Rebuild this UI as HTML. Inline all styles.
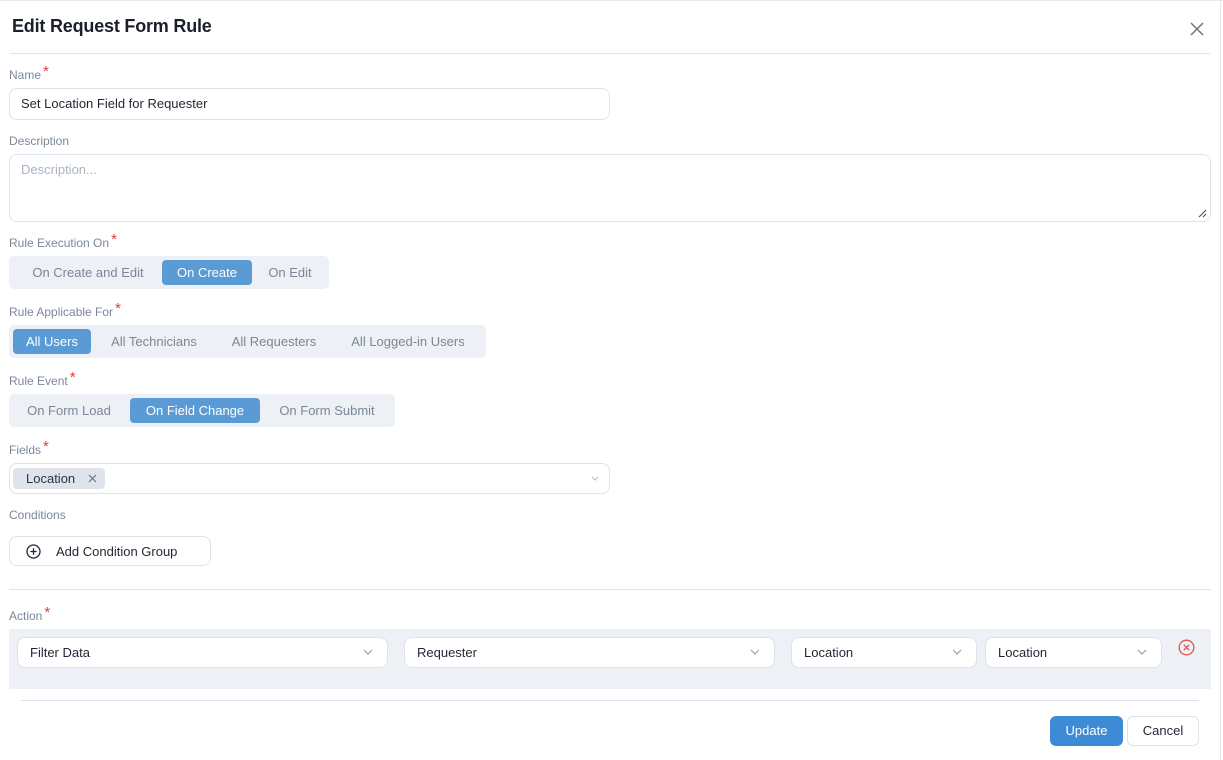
<!DOCTYPE html>
<html><head><style>
*{box-sizing:border-box;margin:0;padding:0}
body{width:1223px;height:760px;background:#fff;font-family:"Liberation Sans",sans-serif;position:relative;overflow:hidden;color:#1f2633}
.a{position:absolute}
.lbl{position:absolute;left:9px;font-size:12px;color:#7b8799}
.lbl b{color:#e53935;font-weight:normal;font-size:15px;position:relative;top:-3px;left:2px;line-height:10px}
.inp{position:absolute;border:1px solid #dde3ea;border-radius:8px;background:#fff}
.seg{position:absolute;background:#edf0f5;border-radius:5px;height:33px;font-size:13px;color:#7b8799}
.seg span{position:absolute;top:4px;height:25px;line-height:25px;text-align:center}
.seg .on{background:#5b9bd5;color:#fff;border-radius:4px}
.sel{position:absolute;top:637px;height:31px;background:#fff;border:1px solid #dde3ea;border-radius:8px;font-size:13px;color:#1f2633;line-height:29px;padding-left:12px}
.chev{position:absolute;right:14px;top:11px}
</style></head><body>
<div class="a" style="left:0;top:0;width:1223px;height:1px;background:#e6e9ee"></div>
<div class="a" style="left:12px;top:16px;font-size:18px;font-weight:bold;color:#1a1f2b;letter-spacing:-0.2px">Edit Request Form Rule</div>
<svg class="a" style="left:1190px;top:22px" width="14" height="14" viewBox="0 0 14 14"><path d="M1 1L13 13M13 1L1 13" stroke="#6b7585" stroke-width="1.5"/></svg>
<div class="a" style="left:10px;top:53px;width:1200px;height:1px;background:#dde3ea"></div>

<div class="lbl" style="top:68px">Name<b>*</b></div>
<div class="inp" style="left:9px;top:88px;width:601px;height:32px;font-size:13px;line-height:30px;padding-left:11px">Set Location Field for Requester</div>

<div class="lbl" style="top:134px">Description</div>
<div class="inp" style="left:9px;top:154px;width:1202px;height:68px;font-size:13px;color:#a8b4c4;padding:7px 11px">Description...</div>
<svg class="a" style="left:1197px;top:208px" width="10" height="10"><path d="M9 2L2 9M9 6L6 9" stroke="#444" stroke-width="1"/></svg>

<div class="lbl" style="top:236px">Rule Execution On<b>*</b></div>
<div class="seg" style="left:9px;top:256px;width:320px"><span style="left:4px;width:150px">On Create and Edit</span><span class="on" style="left:153px;width:90px">On Create</span><span style="left:245px;width:72px">On Edit</span></div>

<div class="lbl" style="top:305px">Rule Applicable For<b>*</b></div>
<div class="seg" style="left:9px;top:325px;width:477px"><span class="on" style="left:4px;width:78px">All Users</span><span style="left:86px;width:118px">All Technicians</span><span style="left:208px;width:114px">All Requesters</span><span style="left:326px;width:146px">All Logged-in Users</span></div>

<div class="lbl" style="top:374px">Rule Event<b>*</b></div>
<div class="seg" style="left:9px;top:394px;width:386px"><span style="left:4px;width:112px">On Form Load</span><span class="on" style="left:121px;width:130px">On Field Change</span><span style="left:255px;width:126px">On Form Submit</span></div>

<div class="lbl" style="top:443px">Fields<b>*</b></div>
<div class="inp" style="left:9px;top:463px;width:601px;height:31px"></div>
<div class="a" style="left:13px;top:468px;width:92px;height:21px;background:#dfe4eb;border-radius:4px;font-size:13px;line-height:21px;padding-left:13px;color:#2b3240">Location</div>
<svg class="a" style="left:88px;top:474px" width="9" height="9"><path d="M1 1L8 8M8 1L1 8" stroke="#6b7585" stroke-width="1.2"/></svg>
<svg class="a" style="left:591px;top:476px" width="8" height="6"><path d="M1 1L4 4L7 1" stroke="#b0b8c4" fill="none"/></svg>

<div class="lbl" style="top:508px">Conditions</div>
<div class="inp" style="left:9px;top:536px;width:202px;height:30px;font-size:13px;line-height:29px;padding-left:46px;color:#1f2633">Add Condition Group</div>
<svg class="a" style="left:26px;top:544px" width="15" height="15" viewBox="0 0 15 15"><circle cx="7.5" cy="7.5" r="6.5" stroke="#1f2633" stroke-width="1.3" fill="none"/><path d="M7.5 4.3V10.7M4.3 7.5H10.7" stroke="#1f2633" stroke-width="1.3"/></svg>

<div class="a" style="left:9px;top:589px;width:1202px;height:1px;background:#dde3ea"></div>
<div class="lbl" style="top:609px">Action<b>*</b></div>
<div class="a" style="left:9px;top:629px;width:1202px;height:60px;background:#edf0f5"></div>
<div class="sel" style="left:17px;width:371px">Filter Data<svg class="chev" width="10" height="6"><path d="M1 1L5 5L9 1" stroke="#8a94a3" fill="none"/></svg></div>
<div class="sel" style="left:404px;width:371px">Requester<svg class="chev" width="10" height="6"><path d="M1 1L5 5L9 1" stroke="#8a94a3" fill="none"/></svg></div>
<div class="sel" style="left:791px;width:186px">Location<svg class="chev" width="10" height="6"><path d="M1 1L5 5L9 1" stroke="#8a94a3" fill="none"/></svg></div>
<div class="sel" style="left:985px;width:177px">Location<svg class="chev" width="10" height="6"><path d="M1 1L5 5L9 1" stroke="#8a94a3" fill="none"/></svg></div>
<svg class="a" style="left:1178px;top:639px" width="17" height="17" viewBox="0 0 17 17"><circle cx="8.5" cy="8.5" r="7.3" stroke="#e5534b" stroke-width="1.3" fill="none"/><path d="M5.8 5.8L11.2 11.2M11.2 5.8L5.8 11.2" stroke="#e5534b" stroke-width="1.3"/></svg>

<div class="a" style="left:21px;top:700px;width:1178px;height:1px;background:#dde3ea"></div>
<div class="a" style="left:1050px;top:716px;width:73px;height:30px;background:#3d8bd4;border-radius:6px;color:#fff;font-size:13px;line-height:30px;text-align:center">Update</div>
<div class="a" style="left:1127px;top:716px;width:72px;height:30px;border:1px solid #dde3ea;border-radius:6px;color:#1f2633;font-size:13px;line-height:28px;text-align:center">Cancel</div>
<div class="a" style="left:1220px;top:0;width:1px;height:760px;background:#e6e9ee"></div>
</body></html>
